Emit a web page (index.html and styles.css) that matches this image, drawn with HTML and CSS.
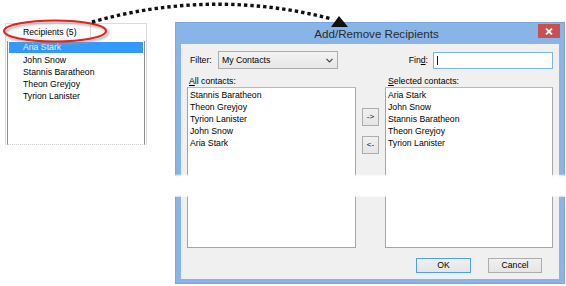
FILE: index.html
```html
<!DOCTYPE html>
<html>
<head>
<meta charset="utf-8">
<link rel="stylesheet" href="styles.css">
</head>
<body>
<div class="page">
  <div class="recip">
    <div class="recip-head"><div class="recip-col">Recipients (5)</div></div>
    <ul class="recip-list">
      <li class="sel">Aria Stark</li>
      <li>John Snow</li>
      <li>Stannis Baratheon</li>
      <li>Theon Greyjoy</li>
      <li>Tyrion Lanister</li>
    </ul>
  </div>

  <div class="dialog">
    <div class="titlebar">
      <span class="title">Add/Remove Recipients</span>
      <span class="close"><svg width="8" height="7" viewBox="0 0 8 7"><path d="M1 0.5 L7 6.5 M7 0.5 L1 6.5" stroke="#fff" stroke-width="1.8"/></svg></span>
    </div>
    <div class="panel">
      <div class="row-top">
        <span class="lbl-filter">Filter:</span>
        <div class="combo"><span>My Contacts</span><svg class="chev" width="7" height="5" viewBox="0 0 7 5"><path d="M0.5 0.8 L3.5 3.8 L6.5 0.8" fill="none" stroke="#444" stroke-width="1.2"/></svg></div>
        <span class="lbl-find">Fin<u>d</u>:</span>
        <div class="find-input"><span class="caret"></span></div>
      </div>
      <div class="lists">
        <div class="col-label"><u>A</u>ll contacts:</div>
        <div></div>
        <div class="col-label right"><u>S</u>elected contacts:</div>
        <ul class="listbox">
          <li>Stannis Baratheon</li>
          <li>Theon Greyjoy</li>
          <li>Tyrion Lanister</li>
          <li>John Snow</li>
          <li>Aria Stark</li>
        </ul>
        <div class="mid">
          <button class="arrow-btn">-&gt;</button>
          <button class="arrow-btn">&lt;-</button>
        </div>
        <ul class="listbox">
          <li>Aria Stark</li>
          <li>John Snow</li>
          <li>Stannis Baratheon</li>
          <li>Theon Greyjoy</li>
          <li>Tyrion Lanister</li>
        </ul>
      </div>
      <div class="actions">
        <button class="btn default">OK</button>
        <button class="btn">Cancel</button>
      </div>
    </div>
  </div>

  <div class="tear"></div>

  <svg class="annot" width="566" height="286" viewBox="0 0 566 286">
    <defs>
      <filter id="sh" x="-20%" y="-50%" width="140%" height="200%">
        <feGaussianBlur stdDeviation="1.2"/>
      </filter>
    </defs>
    <ellipse cx="57" cy="33" rx="51" ry="10.5" fill="none" stroke="#9a9a9a" stroke-width="2" filter="url(#sh)" opacity="0.8"/>
    <ellipse cx="55" cy="31" rx="51" ry="10.5" fill="none" stroke="#e2231f" stroke-width="2"/>
    <path d="M92 22 Q212 -12 332 19" fill="none" stroke="#111" stroke-width="3.4" stroke-dasharray="3.4 3"/>
    <polygon points="339,16 331,27 348,27" fill="#111"/>
  </svg>
</div>
</body>
</html>
```

FILE: styles.css
```css
* { box-sizing: border-box; }
html, body { margin: 0; padding: 0; background: #fff; }
body {
  font-family: "Liberation Sans", Arial, sans-serif;
  font-size: 8.7px;
  color: #000;
}
ul { list-style: none; margin: 0; padding: 0; }
u { text-decoration: underline; text-underline-offset: 1px; }

.page {
  position: relative;
  width: 566px;
  height: 286px;
  overflow: hidden;
  display: flex;
  align-items: flex-start;
}

/* ---- left recipients list ---- */
.recip {
  margin: 23px 0 0 5px;
  width: 142px;
  height: 122px;
  border: 1px solid #dcdcdc;
  border-bottom: none;
  display: flex;
  flex-direction: column;
}
.recip-head {
  height: 17px;
  display: flex;
}
.recip-col {
  width: 85px;
  height: 17px;
  border-right: 1px solid #d9d9d9;
  padding-left: 17px;
  line-height: 17px;
  background: linear-gradient(#ffffff, #f7f7f7);
}
.recip-list {
  flex: 1;
  margin: 0 1px;
  border-left: 1px solid #8e8e8e;
  border-right: 1px solid #8e8e8e;
  border-bottom: 1px dotted #d0d0d0;
  padding: 1px;
}
.recip-list li {
  height: 12px;
  line-height: 12px;
  padding-left: 14px;
}
.recip-list li.sel {
  background: #3399ff;
  color: #eef6ff;
  height: 11px;
  line-height: 11px;
  margin-bottom: 1px;
}

/* ---- dialog ---- */
.dialog {
  margin: 22px 0 0 28px;
  width: 390px;
  height: 262px;
  background: #89b4e7;
  border: 1px solid #7aa7de;
  padding: 0 5px 4px 5px;
  display: flex;
  flex-direction: column;
}
.titlebar {
  height: 21px;
  display: flex;
  align-items: flex-start;
}
.title {
  flex: 1;
  text-align: center;
  padding-left: 34px;
  font-size: 11.6px;
  line-height: 21px;
  color: #2a2a2a;
}
.close {
  width: 22px;
  height: 14px;
  margin-top: 1px;
  margin-right: -1px;
  background: #c9504f;
  display: flex;
  align-items: center;
  justify-content: center;
}
.close svg { display: block; }

.panel {
  flex: 1;
  background: #f0f0f0;
  padding: 7px 6px 6px 6px;
  display: flex;
  flex-direction: column;
}
.row-top {
  height: 18px;
  display: flex;
  align-items: center;
}
.lbl-filter {
  width: 31px;
  padding-left: 3px;
}
.combo {
  width: 120px;
  height: 18px;
  border: 1px solid #acacac;
  background: linear-gradient(#f3f3f3, #e6e6e6);
  display: flex;
  align-items: center;
  justify-content: space-between;
  padding: 0 4px 0 3px;
}
.chev { display: block; }
.lbl-find {
  margin-left: auto;
  margin-right: 5px;
}
.find-input {
  width: 120px;
  height: 17px;
  border: 1px solid #7eb4ea;
  background: #fff;
  padding: 3px 0 0 3px;
}
.caret {
  display: block;
  width: 1px;
  height: 9px;
  background: #111;
}

.lists {
  margin-top: 6px;
  display: grid;
  grid-template-columns: 169px 29px 168px;
  grid-template-rows: 12px 161px;
}
.col-label {
  line-height: 12px;
  padding-left: 2px;
}
.col-label.right { padding-left: 3px; }
.listbox {
  background: #fff;
  border: 1px solid #a5a5a5;
  border-top-color: #b8b8b8;
  padding: 1px 2px;
}
.listbox li {
  height: 12px;
  line-height: 12px;
}
.mid {
  padding-top: 21px;
  display: flex;
  flex-direction: column;
  align-items: center;
  gap: 10px;
}
.arrow-btn {
  width: 17px;
  height: 18px;
  padding: 0;
  margin: 0;
  border: 1px solid #acacac;
  background: linear-gradient(#f0f0f0, #e5e5e5);
  font-family: "Liberation Sans", Arial, sans-serif;
  font-size: 8px;
  color: #000;
  line-height: 16px;
}

.actions {
  margin-top: 10px;
  height: 15px;
  display: flex;
  justify-content: flex-end;
  gap: 17px;
  padding-right: 11px;
}
.btn {
  width: 54px;
  height: 15px;
  padding: 0;
  margin: 0;
  border: 1px solid #acacac;
  background: linear-gradient(#f0f0f0, #e5e5e5);
  font-family: "Liberation Sans", Arial, sans-serif;
  font-size: 8.7px;
  color: #000;
  line-height: 13px;
}
.btn.default {
  width: 55px;
  border-color: #4fa0ea;
}

/* torn-edge overlay across the dialog */
.tear {
  position: absolute;
  left: 170px;
  top: 174px;
  width: 396px;
  height: 23px;
  background: linear-gradient(rgba(255,255,255,0) 0px, rgba(255,255,255,0.9) 2px, #fff 4px, #fff 21px, rgba(255,255,255,0.6) 23px);
}

.annot {
  position: absolute;
  left: 0;
  top: 0;
  pointer-events: none;
}
```
